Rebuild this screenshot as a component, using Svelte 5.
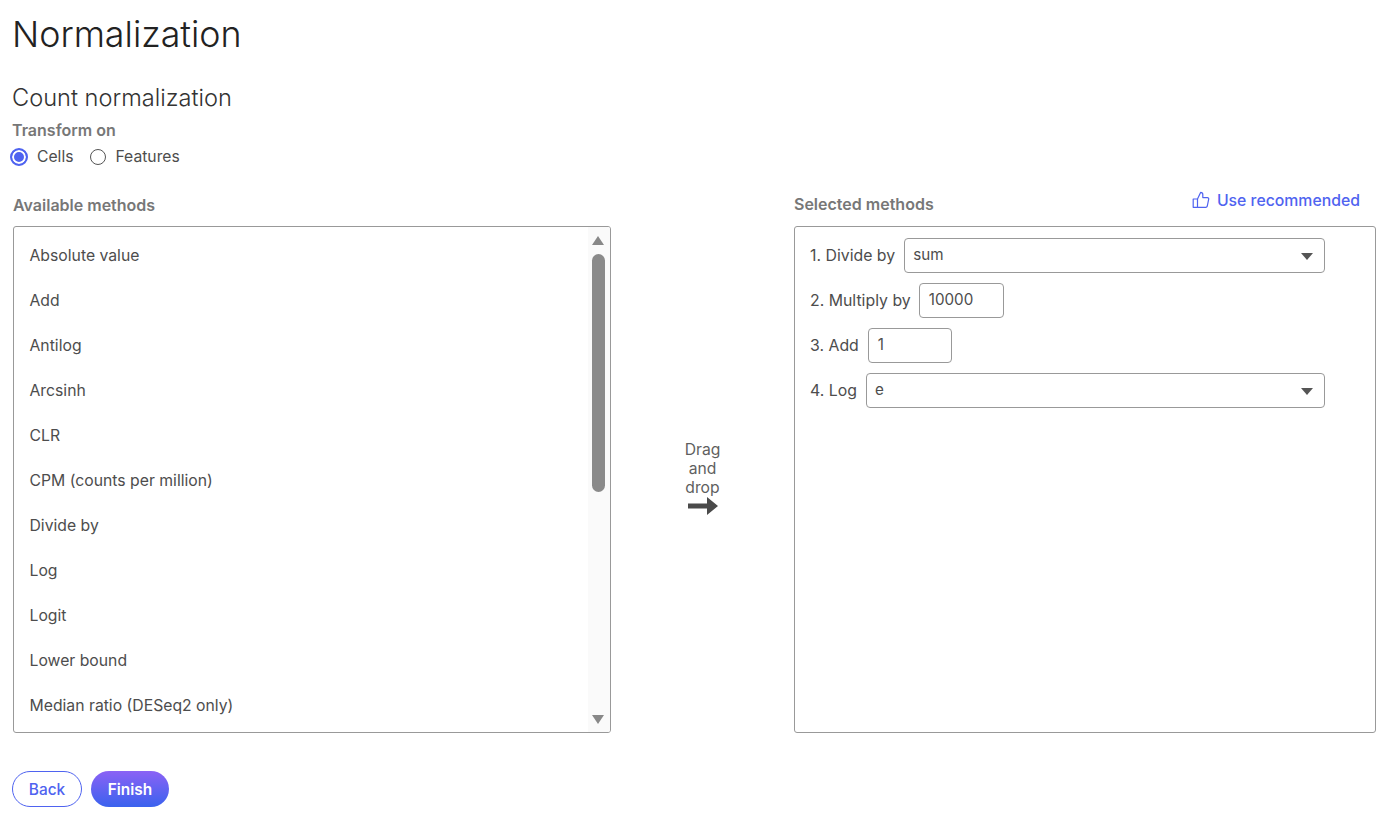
<script>
	const methods = [
		'Absolute value',
		'Add',
		'Antilog',
		'Arcsinh',
		'CLR',
		'CPM (counts per million)',
		'Divide by',
		'Log',
		'Logit',
		'Lower bound',
		'Median ratio (DESeq2 only)'
	];
</script>

<main class="page">
	<h1>Normalization</h1>
	<h2>Count normalization</h2>
	<div class="field-label">Transform on</div>
	<div class="radios">
		<label class="radio"><span class="dot checked"></span>Cells</label>
		<label class="radio"><span class="dot"></span>Features</label>
	</div>

	<div class="columns">
		<section class="left">
			<div class="col-label">Available methods</div>
			<div class="box list-box">
				<ul>
					{#each methods as m}
						<li>{m}</li>
					{/each}
				</ul>
				<div class="scrollbar">
					<span class="arrow up"></span>
					<span class="thumb-track"><span class="thumb"></span></span>
					<span class="arrow down"></span>
				</div>
			</div>
		</section>

		<div class="drag">
			<span>Drag</span>
			<span>and</span>
			<span>drop</span>
			<svg width="30" height="18" viewBox="0 0 30 18">
				<path d="M0 6.5h19V0l11 9-11 9v-6.5H0z" fill="#4a4a4a" />
			</svg>
		</div>

		<section class="right">
			<div class="right-head">
				<div class="col-label">Selected methods</div>
				<button class="recommend">
					<svg width="18" height="18" viewBox="0 0 18 18" fill="none" stroke="#4f63f0" stroke-width="1.2" stroke-linejoin="round">
						<path d="M5.5 8v8.3H1.2V8z" />
						<path d="M5.5 8 8.6 1.4c1.3 0 2.2.9 2.2 2.2v3h4.6c.9 0 1.5.8 1.3 1.6l-1.4 6.8c-.2.7-.7 1.3-1.5 1.3H5.5" />
					</svg>
					Use recommended
				</button>
			</div>
			<div class="box selected-box">
				<div class="row">
					<span>1. Divide by</span>
					<div class="select wide-1">sum<span class="caret"></span></div>
				</div>
				<div class="row tight">
					<span>2. Multiply by</span>
					<div class="input">10000</div>
				</div>
				<div class="row">
					<span>3. Add</span>
					<div class="input add">1</div>
				</div>
				<div class="row">
					<span>4. Log</span>
					<div class="select wide-4">e<span class="caret"></span></div>
				</div>
			</div>
		</section>
	</div>

	<div class="actions">
		<button class="btn back">Back</button>
		<button class="btn finish">Finish</button>
	</div>
</main>

<style>
	:global(body) {
		margin: 0;
		background: #fff;
	}

	.page {
		box-sizing: border-box;
		height: 813px;
		padding: 12px 16px 0 12px;
		font-family: Inter, "Liberation Sans", sans-serif;
		color: #4d4d4d;
		overflow: hidden;
	}

	h1 {
		margin: 0;
		font-size: 35.8px;
		line-height: 44px;
		font-weight: 300;
		color: #222;
	}

	h2 {
		margin: 27px 0 0;
		font-size: 23.6px;
		line-height: 30px;
		font-weight: 300;
		color: #333;
	}

	.field-label {
		margin-top: 9px;
		font-size: 16px;
		line-height: 16px;
		font-weight: 600;
		color: #777;
	}

	.radios {
		display: flex;
		gap: 16px;
		margin: 9px 0 0 -2px;
	}

	.radio {
		display: flex;
		align-items: center;
		gap: 9px;
		font-size: 15.7px;
		line-height: 20px;
		color: #4d4d4d;
	}

	.dot {
		box-sizing: border-box;
		width: 16px;
		height: 16px;
		border: 1px solid #555;
		border-radius: 50%;
		background: #fff;
		margin-left: 1px;
	}

	.dot.checked {
		width: 18px;
		height: 18px;
		margin-left: 0;
		border: 2px solid #4f63f0;
		box-shadow: inset 0 0 0 2px #fff;
		background: #4f63f0;
	}

	.columns {
		display: flex;
		margin: 30px 0 0 1px;
	}

	.left {
		width: 598px;
		flex: none;
	}

	.right {
		width: 582px;
		flex: none;
	}

	.col-label {
		font-size: 16px;
		line-height: 16px;
		font-weight: 600;
		color: #777;
	}

	.box {
		box-sizing: border-box;
		border: 1px solid #999;
		border-radius: 3px;
		height: 507px;
	}

	.left .col-label {
		margin-bottom: 13px;
	}

	.list-box {
		display: flex;
		overflow: hidden;
	}

	ul {
		flex: 1;
		margin: 0;
		padding: 6px 0 0 15.5px;
		list-style: none;
	}

	li {
		height: 45px;
		line-height: 45px;
		font-size: 15.75px;
		white-space: nowrap;
	}

	.scrollbar {
		width: 22px;
		flex: none;
		background: #fafafa;
		display: flex;
		flex-direction: column;
		align-items: center;
		padding: 9px 2px 8px 0;
		box-sizing: border-box;
	}

	.arrow {
		width: 0;
		height: 0;
		border-left: 6.5px solid transparent;
		border-right: 6.5px solid transparent;
		flex: none;
	}

	.arrow.up {
		border-bottom: 9px solid #888;
	}

	.arrow.down {
		border-top: 9px solid #888;
	}

	.thumb-track {
		flex: 1;
		padding-top: 9px;
	}

	.thumb {
		display: block;
		width: 13px;
		height: 238px;
		border-radius: 7px;
		background: #8a8a8a;
	}

	.drag {
		width: 183px;
		flex: none;
		display: flex;
		flex-direction: column;
		align-items: center;
		padding-top: 243px;
		font-size: 15.7px;
		line-height: 19px;
		color: #5f5f5f;
		box-sizing: border-box;
	}

	.right-head {
		display: flex;
		justify-content: space-between;
		height: 29px;
	}

	.right-head .col-label {
		margin-top: -1px;
	}

	.recommend {
		display: flex;
		align-items: center;
		gap: 7px;
		padding: 0;
		margin: -12px 16px 0 0;
		height: 30px;
		border: 0;
		background: none;
		font: inherit;
		font-size: 15.8px;
		font-weight: 500;
		color: #4f63f0;
	}

	.selected-box {
		padding: 11px 15px;
		display: flex;
		flex-direction: column;
		gap: 10px;
	}

	.row {
		display: flex;
		align-items: center;
		gap: 9px;
		height: 35px;
		font-size: 15.85px;
	}

	.row.tight {
		gap: 8px;
	}

	.select,
	.input {
		box-sizing: border-box;
		height: 35px;
		line-height: 31px;
		border: 1px solid #999;
		border-radius: 4px;
		padding: 0 8px;
		font-size: 15.2px;
		background: #fff;
	}

	.select {
		position: relative;
	}

	.wide-1 {
		width: 421px;
	}

	.wide-4 {
		width: 459px;
	}

	.input {
		width: 85px;
		padding-left: 9px;
	}

	.input.add {
		width: 84px;
	}

	.caret {
		position: absolute;
		right: 11px;
		top: 14px;
		border-left: 6px solid transparent;
		border-right: 6px solid transparent;
		border-top: 7px solid #555;
	}

	.actions {
		display: flex;
		gap: 9px;
		margin-top: 38px;
	}

	.btn {
		height: 36px;
		border-radius: 18px;
		font: inherit;
		font-size: 15.4px;
		font-weight: 500;
	}

	.back {
		width: 70px;
		border: 1px solid #4f63f0;
		background: #fff;
		color: #4f63f0;
	}

	.finish {
		width: 78px;
		border: 0;
		background: linear-gradient(#8b62f5, #3a62ee);
		color: #fff;
		font-weight: 600;
	}
</style>
